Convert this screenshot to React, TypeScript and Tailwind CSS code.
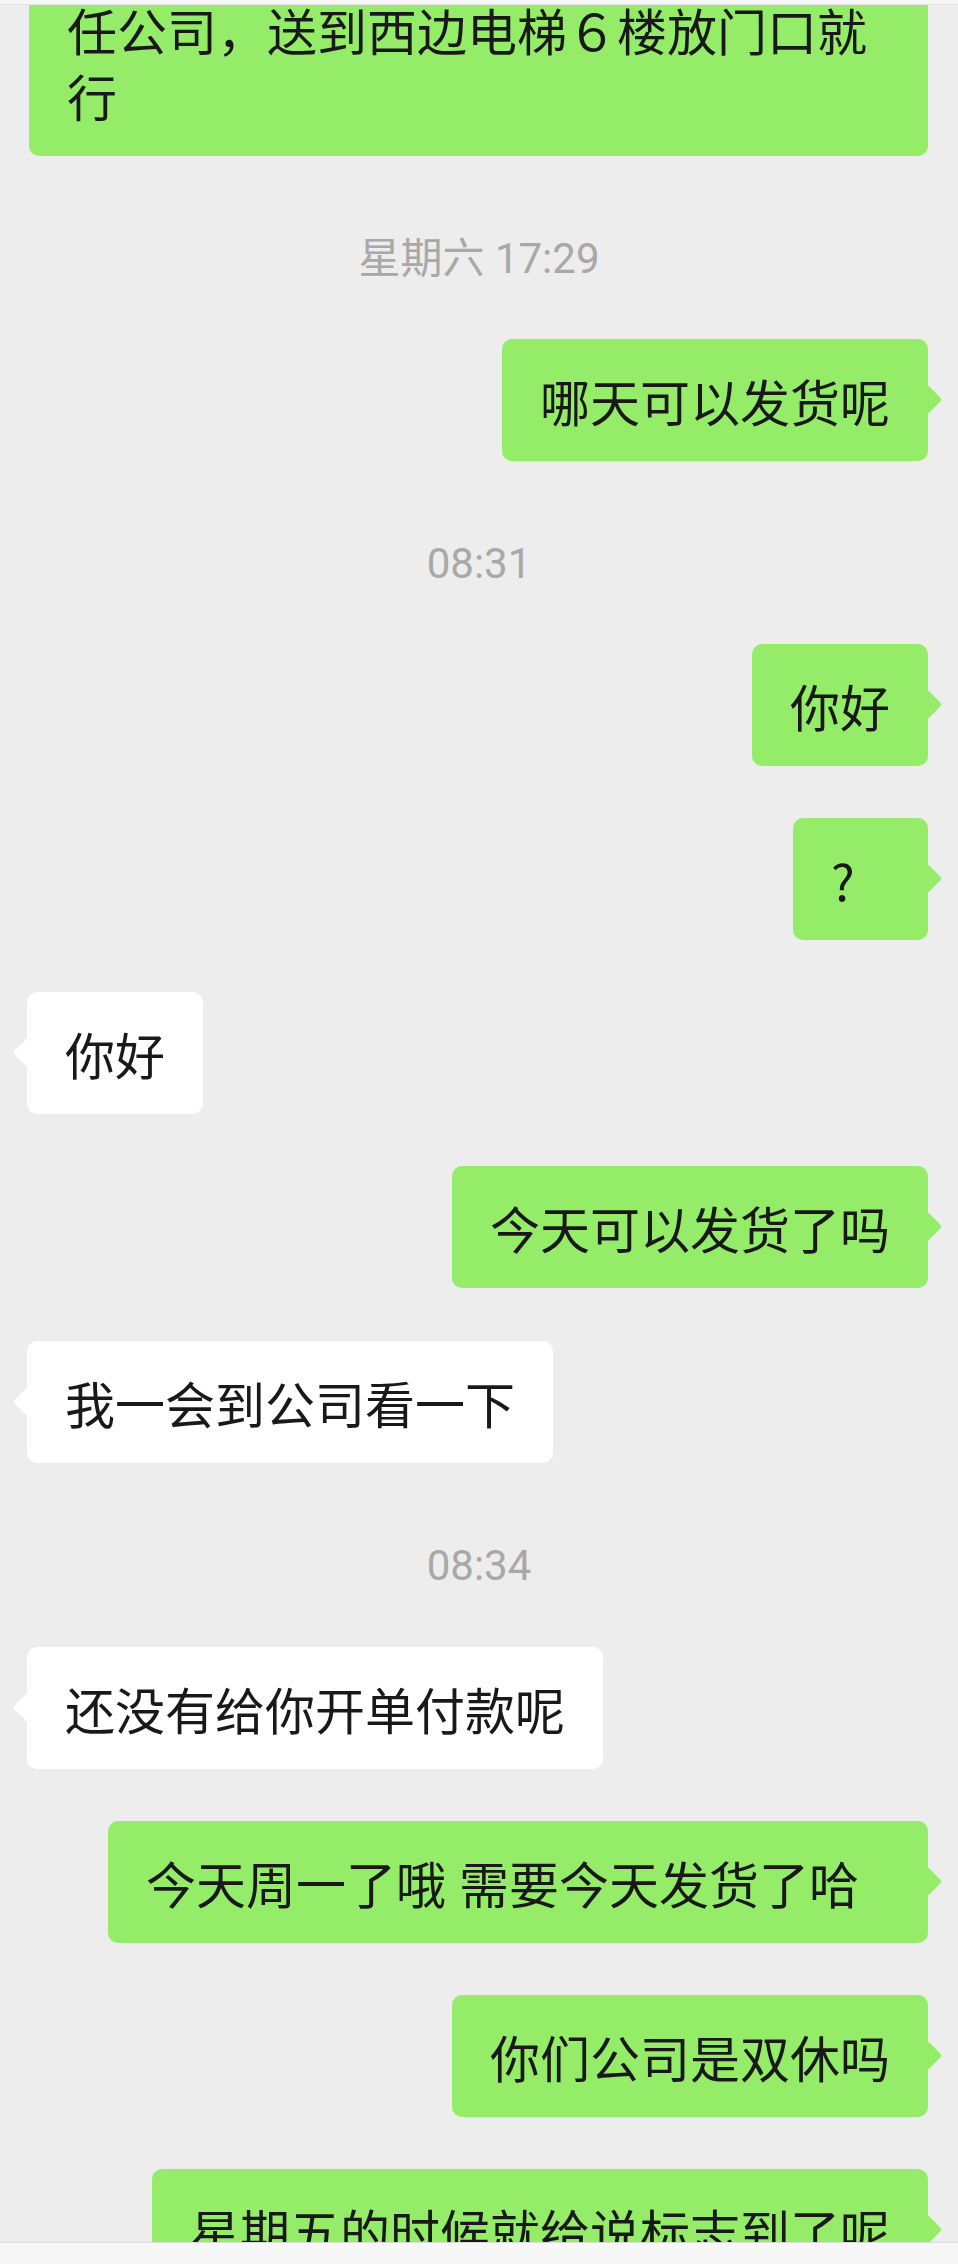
import React from 'react';

type Item =
  | { kind: 'time'; text: string; mt: number }
  | { kind: 'msg'; side: 'left' | 'right'; text: React.ReactNode; mt: number; minW?: boolean; noTail?: boolean };

const FONT = { fontFamily: '"Noto Sans CJK SC", "Noto Sans", sans-serif' };
const TIME_FONT = { fontFamily: 'Roboto, "Noto Sans CJK SC", sans-serif' };

const items: Item[] = [
  // continuation of a longer bubble scrolled above the top edge, so its tail is off screen
  { kind: 'msg', side: 'right', text: '任公司，送到西边电梯６楼放门口就行', mt: -32, noTail: true },
  { kind: 'time', text: '星期六 17:29', mt: 79 },
  { kind: 'msg', side: 'right', text: '哪天可以发货呢', mt: 56 },
  { kind: 'time', text: '08:31', mt: 79 },
  { kind: 'msg', side: 'right', text: '你好', mt: 56 },
  { kind: 'msg', side: 'right', text: '?', mt: 52, minW: true },
  { kind: 'msg', side: 'left', text: '你好', mt: 52 },
  { kind: 'msg', side: 'right', text: '今天可以发货了吗', mt: 52 },
  { kind: 'msg', side: 'left', text: '我一会到公司看一下', mt: 53 },
  { kind: 'time', text: '08:34', mt: 79 },
  { kind: 'msg', side: 'left', text: '还没有给你开单付款呢', mt: 57 },
  {
    kind: 'msg',
    side: 'right',
    text: (
      <>
        今天周一了哦<span className="inline-block w-[13px]" />需要今天发货了哈<span className="inline-block w-[31px]" />
      </>
    ),
    mt: 52,
  },
  { kind: 'msg', side: 'right', text: '你们公司是双休吗', mt: 52 },
  { kind: 'msg', side: 'right', text: '星期五的时候就给说标志到了呢', mt: 52 },
];

const Bubble: React.FC<{ side: 'left' | 'right'; minW?: boolean; noTail?: boolean; children: React.ReactNode }> = ({
  side,
  minW,
  noTail,
  children,
}) => {
  const isRight = side === 'right';
  return (
    <div
      className={`relative max-w-[899px] rounded-[10px] px-[38px] py-[28px] text-[50px] leading-[66px] text-[#191919] ${
        isRight ? 'bg-[#95ec69]' : 'bg-white'
      } ${minW ? 'min-w-[135px]' : ''}`}
      style={FONT}
    >
      {!noTail && (
        <span
          className={`absolute top-[50px] h-[21px] w-[21px] rotate-45 rounded-[3px] ${
            isRight ? 'right-[-10px] bg-[#95ec69]' : 'left-[-10px] bg-white'
          }`}
        />
      )}
      <span className="relative">{children}</span>
    </div>
  );
};

export default function App() {
  return (
    <div className="relative h-[2264px] w-[958px] overflow-hidden bg-[#ededed]">
      <div className="flex flex-col">
        {items.map((item, i) =>
          item.kind === 'time' ? (
            <div
              key={i}
              className="text-center text-[42px] leading-[48px] text-[#a8a8a8]"
              style={{ ...TIME_FONT, marginTop: item.mt }}
            >
              {item.text}
            </div>
          ) : (
            <div
              key={i}
              className={`flex ${item.side === 'right' ? 'justify-end pr-[30px]' : 'justify-start pl-[27px]'}`}
              style={{ marginTop: item.mt }}
            >
              <Bubble side={item.side} minW={item.minW} noTail={item.noTail}>
                {item.text}
              </Bubble>
            </div>
          )
        )}
      </div>

      {/* top bar edge */}
      <div className="absolute left-0 right-0 top-0 h-[5px] border-b border-[#e2e2e2] bg-[#f6f6f6]" />

      {/* bottom input bar edge */}
      <div className="absolute bottom-0 left-0 right-0 h-[22px] border-t border-[#dcdcdc] bg-[#f7f7f7]" />
    </div>
  );
}
